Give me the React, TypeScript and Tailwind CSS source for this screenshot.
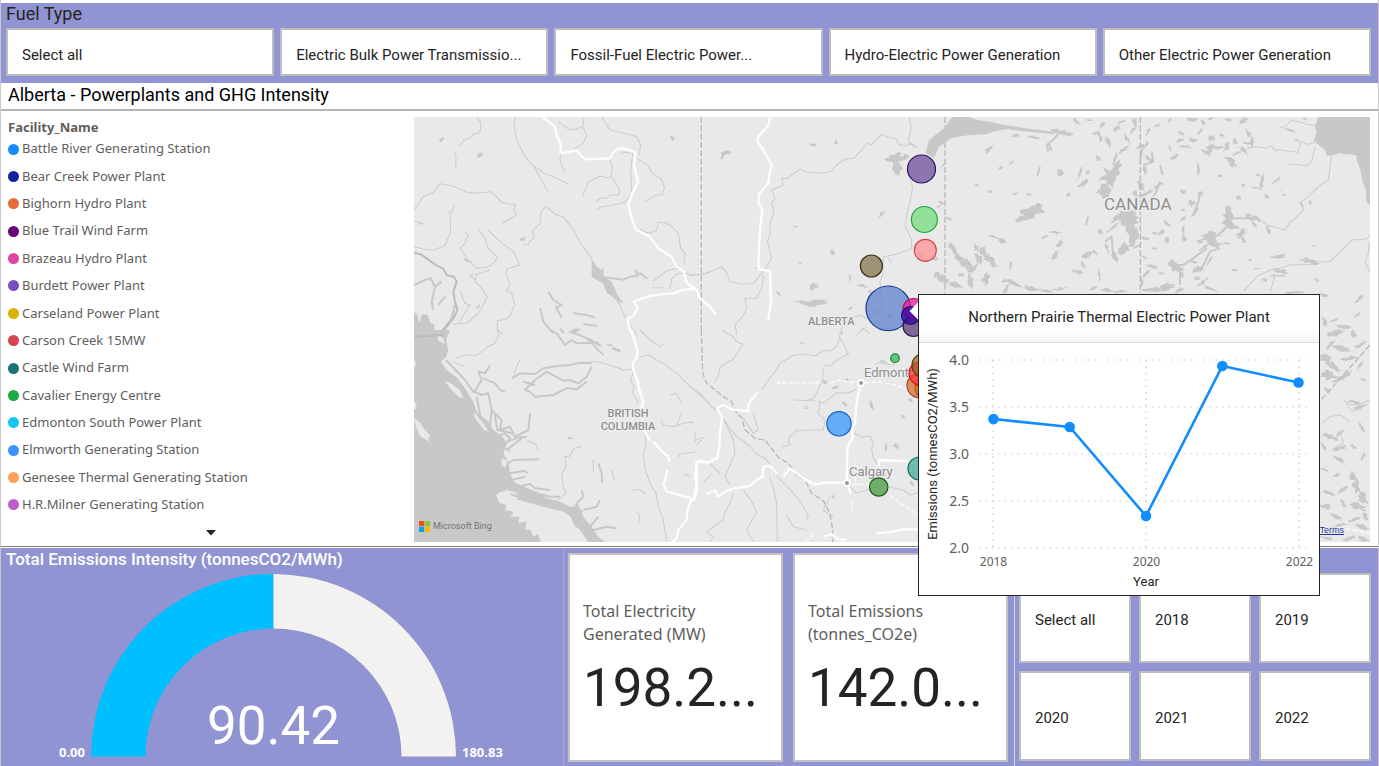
import React from "react";

const din = "font-['Roboto',sans-serif]";
const segoe = "font-['Noto_Sans','Open_Sans',sans-serif]";

const fuelTypes = [
  "Select all",
  "Electric Bulk Power Transmissio...",
  "Fossil-Fuel Electric Power...",
  "Hydro-Electric Power Generation",
  "Other Electric Power Generation",
];

const years = ["Select all", "2018", "2019", "2020", "2021", "2022"];

const facilities: [string, string][] = [
  ["Battle River Generating Station", "#118dff"],
  ["Bear Creek Power Plant", "#12239e"],
  ["Bighorn Hydro Plant", "#e66c37"],
  ["Blue Trail Wind Farm", "#6b007b"],
  ["Brazeau Hydro Plant", "#e044a7"],
  ["Burdett Power Plant", "#744ec2"],
  ["Carseland Power Plant", "#d9b300"],
  ["Carson Creek 15MW", "#d64550"],
  ["Castle Wind Farm", "#197278"],
  ["Cavalier Energy Centre", "#1aab40"],
  ["Edmonton South Power Plant", "#15c6f4"],
  ["Elmworth Generating Station", "#4092ff"],
  ["Genesee Thermal Generating Station", "#ffa058"],
  ["H.R.Milner Generating Station", "#be5dc9"],
];

/* Each map sheet is drawn at three units per pixel from its own origin. */
type Lake = [x: number, y: number, length: number, width: number, angle: number];

interface Sheet {
  origin: [number, number];
  water?: string;
  land?: string;
  rivers: string;
  channels?: string;
  coast?: string;
  roads?: string;
  minorRoads?: string;
  borders?: string;
  lakes: Lake[];
}

const sheets: Sheet[] = [
  {
    origin: [410, 115],
    water: "M12 590L22 600 28 625 36 598 52 600 62 625 72 628 74 645 100 655 100 662H12Z M545 430L560 455 575 465 582 455 580 480 605 500 622 540 640 565 625 560 590 532 578 505 545 485Z",
    rivers:
      "M200 6L212 22 212 45 205 55 190 58 180 70 165 72 150 92 M132 108L138 125 137 160 M316 6L312 30 318 65 325 85 345 125 370 152 405 175 440 190 475 206 M370 152L395 195 413 230 M444 20L480 45 500 42 518 34 522 8 M518 34L530 60 520 85 488 105 M575 6L600 45 640 54 680 65 692 90 688 120 M680 130L715 152 725 172 740 185 752 190 764 215 757 238 735 242 708 258 M452 118L450 135 456 155 468 170 M600 130L607 160 603 185 590 188 570 183 555 192 535 200 525 225 518 245 M605 185L630 228 625 240 600 240 590 250 575 248 558 258 M630 118L640 112 668 115 662 175 666 235 645 262 620 268 600 272 575 275 558 286 M12 285L40 245 70 232 90 206 125 212 150 222 170 232 190 235 245 230 275 262 300 268 316 268 312 285 319 300 300 312 278 325 M132 268L128 288 120 290 122 350 105 392 70 405 40 402 12 395 M12 318L40 325 22 328 M338 390L355 388 360 378 372 370 368 348 390 325 393 290 408 275 440 300 460 305 490 345 515 390 545 430 M615 545L632 575 645 605 660 630 680 660 M165 352L175 360 165 385 150 400 175 435 200 460 235 455 255 440 262 425 235 400 225 370 205 342 M235 345L270 380 310 410 330 450 290 462 288 480 300 505 290 528 305 535 315 570 300 600 290 612 262 618 262 640 275 658 M200 478L195 500 215 520 232 545 215 580 200 600 170 625 130 628 M240 465L200 478 180 480 195 495 M690 340L705 350 720 355 740 345 745 322 765 322 780 330 805 355 812 400 825 415 822 445 M728 500L770 468 800 460 840 480 880 478 900 470 M780 522L785 490 800 478 820 475 M728 518H758 M150 528L165 565 180 570 145 625",
    channels:
      "M560 488L600 488 640 494 660 485 680 482 690 474 712 492 M675 465L685 485 M415 530L430 555 455 570 438 578 455 607 M390 580L400 620 430 655 M462 655L450 640 M490 595L530 600 555 608 M12 510L45 495 62 490 75 515 65 560 70 585 M75 515L95 500 M85 570L105 545 M90 655L125 610 135 570 M520 628L560 632",
    coast: "M12 413L32 418 50 430 75 448 100 462 110 480 132 486 140 500 130 530 135 560 142 585 130 610 110 635 90 660",
    roads:
      "M398 6L410 15 435 35 440 60 452 90 452 115 470 112 500 105 512 122 528 133 600 130 610 112 625 100 650 102 675 112 672 150 684 200 665 240 655 268 665 310 678 345 720 365 745 400 785 425 800 455 822 470 828 500 855 525 M855 522L820 524 790 535 755 538 710 545 672 560 683 578 670 602 652 612 658 640 668 660",
    borders: "M874 6V645",
    lakes: [[95, 74, 18, 10, -30], [208, 122, 30, 12, -35], [337, 372, 22, 12, -35], [788, 70, 18, 12, 40], [175, 438, 30, 8, 20], [495, 648, 36, 14, -15], [205, 575, 18, 6, -60]],
  },
  {
    origin: [410, 330],
    water:
      "M12 0H120L108 30 115 60 108 82 92 95 110 120 140 142 165 175 190 215 200 245 235 275 250 300 275 318 290 340 280 370 295 395 300 430 312 455 340 470 380 485 410 505 450 515 480 530 500 530 520 560 540 585 565 620 585 636H12Z",
    land:
      "M258 495L272 485 292 480 325 490 328 505 345 515 400 530 460 545 482 560 492 585 510 600 535 636H392L385 612 370 620 362 600 345 598 350 575 325 580 328 560 300 560 312 545 285 540 290 525 268 518Z M104 152L120 158 150 180 160 205 145 200 125 180Z M12 265L30 278 45 300 60 315 55 330 68 345 50 330 30 318 18 290Z M12 90l6 5-2 15-4 2Z M12 212l8 10-2 15-6 2Z M82 15l18 10 5 18-20-12Z M190 245L220 280 235 305 222 300 195 265Z M275 385l18 8-8 20-10-8Z",
    rivers:
      "M138 85L165 75 200 76 235 50 255 40 265 15 262 0 M310 135L320 110 330 88 M540 95L560 95 600 105 640 120 668 118 M690 80L715 75 740 90 760 100 800 130 825 155 860 185 900 222 M690 0L720 30 750 50 760 40 M670 125L662 150 672 170 668 190 685 218 M705 300L708 345 700 370 706 420 720 460 738 490 745 530 760 570 770 636 M515 350L492 355 480 378 465 380 468 410 455 430 460 470 468 490 440 512 M605 420L613 450 M550 390V425 M780 195L798 190 815 218 M850 275L820 280 790 290 760 285 752 270 M800 285L815 248 M855 305V335 M808 382V372L858 365 M665 482L685 478 710 492 M680 548L690 555 685 580 M820 432L842 438 M350 330L380 345 382 360 M130 95L165 110",
    channels:
      "M108 90L165 150 190 185 M240 105L225 130 205 125 215 150 190 190 M220 145L255 160 270 180 285 185 M195 185L215 195 235 190 245 240 240 285 M200 200L210 255 M245 240L275 270 270 300 300 290 315 320 355 300 360 250 M255 255L262 300 310 310 M280 340L325 322 350 320 M290 360L340 320 M285 405L310 390 388 388 M300 430L345 422 352 430 M305 450L345 440 M325 470L360 462 375 475 420 480 M380 490L420 500 450 500 M305 145L330 130 375 132 400 115 440 108 480 105 510 98 545 100 M545 110L530 140 505 160 480 150 460 152 410 125 375 150 345 180 360 185 375 200 430 195 470 175 500 178 530 155 M340 155L375 165 M420 0L440 10 465 45 485 30 500 40 545 38 560 55 580 75 M480 5L520 20 540 30 M565 400L575 430 576 460 M515 480L520 500 500 520 510 560 540 590 M520 540L560 530 570 510 M540 590L565 560 M550 600L590 590 620 595 M180 240L150 215 M262 320L285 310 300 325 280 350 300 365 M350 500L365 485 395 495 M495 525L515 545 505 570 525 600 M470 545L490 540 500 560",
    coast: "M12 20L100 15",
    roads:
      "M665 0L672 25 682 60 680 85 668 100 670 120 682 150 688 180 700 215 692 240 700 300 720 330 M730 335L760 368 775 380 778 395 M772 420L768 440 760 460 770 485 790 490 845 505 832 540 830 570 805 600 800 625 785 636 M852 500L858 470 862 440 858 400 870 392 900 398",
    lakes: [[480, 325, 20, 8, 10], [620, 60, 30, 10, 30], [600, 45, 20, 6, 10], [550, 35, 50, 12, 30], [330, 500, 50, 20, 20], [505, 565, 50, 24, 60], [495, 540, 30, 20, 30]],
  },
  {
    origin: [690, 115],
    rivers:
      "M658 6L664 40 656 70 658 88 680 98 665 85 645 92 625 88 620 72 600 68 575 58 560 72 545 90 530 85 518 102 490 130 465 132 440 150 425 168 400 175 350 172 330 162 290 190 275 190 280 210 245 225 255 250 245 265 252 290 240 330 240 360 232 380 245 430 220 470 190 505 160 508 120 500 108 470 95 455 50 475 0 482 M220 480L215 520 200 550 165 550 170 580 160 600 135 630 140 660 M663 200L668 220 660 260 650 300 645 330 665 375 665 400 640 410 620 418 580 425 578 480 570 500 575 560 565 600 M455 660L455 635 480 610 515 600 530 612 550 600 560 580 M595 428L605 445 M500 660L520 640 540 655",
    roads:
      "M240 6L235 30 205 65 202 80 220 105 245 150 238 180 235 205 207 238 205 262 217 285 210 340 207 400 205 462 240 468 243 560 235 615 M0 510L20 525 30 550 60 575 78 600",
    borders: "M765 6V535",
    lakes: [
      [615, 130, 60, 36, 10], [620, 155, 50, 30, 70], [645, 125, 24, 16, 0], [108, 114, 36, 12, -10], [98, 124, 20, 8, -50], [370, 90, 24, 9, 15], [438, 80, 14, 12, 60], [575, 298, 26, 10, -50], [315, 335, 16, 6, 0], [428, 412, 20, 14, 40], [330, 444, 12, 6, 20], [370, 515, 34, 22, 0], [350, 565, 80, 12, 8], [385, 562, 60, 20, -20], [480, 488, 26, 8, 80], [518, 512, 36, 8, 10], [265, 535, 22, 8, 50], [540, 530, 14, 14, 0], [600, 605, 22, 12, 60], [480, 580, 20, 8, -20], [200, 460, 12, 8, 0],
      [690, 420, 26, 16, 60], [735, 430, 24, 14, 20],
    ],
  },
  {
    origin: [690, 330],
    rivers:
      "M95 0L130 20 140 35 158 42 145 65 130 88 90 110 88 130 75 155 M455 0L448 20 462 45 475 72 440 90 425 105 400 108 398 150 372 205 355 210 M450 25L440 48 425 62 400 62 375 78 345 72 310 75 270 100 255 125 235 150 215 180 M385 212L400 220 440 188 470 190 500 178 M390 215L385 250 405 270 400 300 360 300 320 302 295 325 300 345 275 350 M485 305L515 322 540 318 550 340 545 355 550 385 560 400 580 440 595 470 640 480 660 495 685 488 M0 170L35 195 60 225 95 255 115 290 140 320 175 345 200 372 225 385 240 402 M95 255L130 330 135 370 105 440 120 465 M160 480L185 515 200 545 170 600 190 636 M238 440L252 480 260 520 262 636 M262 440L300 478 335 520 355 560 350 570 M60 636L70 620 50 605 100 570 105 545 120 520 130 490 M0 275L10 280 M15 330L45 320 M20 345L35 330 M340 235H355L345 225 M310 210L375 212 M480 470L500 490 530 480 560 470 M40 460L65 430 M420 500L400 540 430 560 M190 250L205 300 190 310 160 265 M60 400L90 430 M290 555L310 590 350 600 M555 105L565 98 610 105 620 95",
    roads:
      "M80 235L100 225 125 238 175 243 175 222 205 185 M80 235L97 262 90 310 88 355 80 385 55 398 22 395 15 435 22 480 12 510 0 515 M50 492L75 482 85 500 105 485 130 475 180 468 200 450 218 440 220 410 240 408 262 430 M280 440L300 415 345 448 375 463 405 458 470 458 M512 165L505 190 498 235 495 280 487 295 488 320 472 355 470 455 482 492 M565 410L567 390 640 393 685 400 M400 620L425 612 445 628 470 630 M560 610L610 605 640 598 685 598 M262 158H270",
    minorRoads:
      "M275 158H395 M420 160L450 150 495 158 M525 160L560 155 620 165 650 180 M495 400V462 M488 463H540 M600 495L640 525 685 555 M485 515L488 545 M0 505H20 M345 635L370 615 M395 108l5 5",
    borders: "M34 0L38 130 50 160 100 200 125 215 140 250 155 262 165 300 195 325 225 330 265 382 295 400 320 435 345 450 365 490 400 512 420 550 428 600V636",
    lakes: [
      [465, 222, 24, 10, 40], [545, 225, 30, 10, 70], [405, 155, 16, 12, 20], [438, 172, 20, 10, -10], [620, 350, 26, 14, 50], [588, 350, 26, 10, 90], [475, 300, 16, 10, 50], [580, 95, 24, 8, 10], [545, 140, 20, 8, -20], [470, 150, 18, 10, -10], [430, 500, 12, 8, 0], [665, 460, 22, 8, 60], [600, 130, 18, 6, 10], [335, 40, 14, 6, 20], [660, 210, 20, 8, 20], [640, 260, 16, 8, 40],
    ],
  },
  {
    origin: [980, 115],
    water:
      "M1015 6H1170V270L1160 262 1158 225 1148 200 1140 160 1130 135 1130 122 1112 118 1090 118 1080 114 1060 120 1040 122 1035 105 1018 92 1002 78 1010 50 1005 35Z M-163 113L-153 75 -108 40 -83 6H-33L-10 15 40 22 90 35 85 42 45 48 20 58 -30 60 -83 68 -123 95 -138 130Z M75 30L150 42 225 50 220 58 150 50 90 44Z",
    rivers:
      "M1055 120L1045 195 1015 215 985 245 965 260 970 285 945 310 930 322 915 345 890 338 860 330 835 310 M800 100L830 95 860 100 872 92 885 105 900 105 955 112 962 80 985 88 1010 80 M1170 360L1160 372 1115 375 1085 405 1050 440 1000 440 M1000 448L930 450 900 460 870 465 830 485 790 530 M1168 380L1165 415 1155 440 1170 472 M1005 95L995 140 980 152 945 148 922 148 M900 38L920 32 935 15 960 22 980 28 1012 32 M870 530L880 500 885 480 M900 225L905 225",
    channels:
      "M205 110L200 90 222 72 240 50 M640 300L655 260 662 232 M505 260L525 240 540 200 M350 235L365 220 M375 380L395 365 400 430 M575 450L610 450 640 430 680 400 M600 460L600 510 M65 500L90 495 120 515 M840 225L850 185 M655 180L655 150 M540 150L548 180 M470 100L490 90 480 140 M860 335L870 355 M760 310L830 310 840 320 M660 470L690 410 720 400 M515 110L520 140 490 150 M325 305L318 330 M180 155L172 182",
    borders: "M481 6V535",
    lakes: [
      [390, 185, 70, 56, -50], [378, 225, 56, 34, 100], [410, 160, 56, 20, -60], [405, 130, 50, 10, -70], [430, 105, 40, 12, -30], [445, 310, 66, 48, 10], [460, 355, 90, 40, 85], [435, 400, 50, 26, 130], [405, 425, 40, 20, 60], [420, 300, 60, 18, -40], [155, 292, 72, 42, -10], [125, 312, 50, 18, -30], [170, 275, 40, 16, -30], [240, 172, 26, 22, 100], [25, 104, 30, 12, -40], [60, 160, 22, 8, -40], [95, 142, 22, 6, -45], [105, 62, 30, 10, 0], [160, 66, 40, 10, 10], [245, 52, 60, 18, 10], [210, 95, 26, 10, 70], [30, 230, 16, 12, 0], [105, 237, 18, 8, -20], [148, 238, 20, 8, 10], [265, 240, 18, 10, -30], [40, 365, 40, 10, 20], [65, 378, 36, 14, 30], [25, 430, 40, 26, 60], [10, 410, 30, 20, 80], [18, 490, 40, 26, 110], [40, 450, 26, 12, 20], [92, 450, 34, 8, 95], [225, 352, 40, 10, 5], [195, 365, 24, 8, -20], [240, 385, 34, 14, -60], [225, 420, 40, 14, -50], [290, 470, 34, 12, 10], [320, 420, 30, 20, -20], [310, 450, 24, 10, 60], [358, 480, 40, 8, 85], [380, 395, 40, 10, 70], [395, 340, 60, 8, -40], [360, 350, 20, 14, 60], [345, 412, 24, 10, 30], [300, 175, 50, 8, -70], [310, 205, 36, 14, -40], [322, 172, 16, 12, 0], [355, 130, 20, 16, 60], [360, 65, 40, 10, 70], [385, 80, 40, 14, 60], [365, 30, 26, 10, -50], [345, 55, 18, 10, 0], [410, 40, 30, 10, -40], [425, 20, 30, 8, -20], [465, 20, 20, 16, 60], [460, 45, 30, 10, -50], [290, 20, 26, 10, 40], [325, 15, 26, 6, 0], [440, 70, 30, 10, 60], [505, 50, 28, 8, -60], [530, 32, 22, 10, -20], [570, 15, 18, 10, -30], [498, 90, 30, 8, -60], [510, 135, 40, 14, 40], [495, 165, 30, 16, 90], [485, 215, 40, 16, 70], [500, 235, 50, 10, -30], [530, 215, 30, 8, -50], [465, 235, 24, 16, 60], [560, 325, 30, 12, 40], [545, 352, 24, 12, -50], [525, 355, 20, 10, 10], [495, 370, 34, 10, 5], [560, 375, 14, 22, 0], [525, 400, 16, 8, 0], [515, 455, 40, 12, 20], [500, 475, 40, 10, -40], [545, 475, 18, 8, 0], [470, 395, 30, 8, -30], [490, 425, 20, 8, 30], [610, 230, 20, 14, 0], [635, 265, 20, 22, 60], [660, 235, 16, 16, 20], [645, 290, 40, 10, -60], [610, 310, 22, 12, -30], [612, 370, 24, 16, 80], [610, 345, 26, 10, 90], [660, 380, 20, 12, 0], [610, 285, 16, 8, 0],
      [745, 305, 66, 28, 85], [750, 330, 50, 22, 20], [725, 350, 50, 10, -40], [690, 365, 60, 40, -20], [700, 385, 50, 18, 30], [675, 395, 40, 12, -30], [785, 355, 40, 20, -50], [790, 375, 26, 12, 60], [825, 310, 44, 14, 10], [820, 325, 30, 10, 60], [805, 300, 20, 8, 0], [865, 345, 24, 12, 70], [740, 385, 40, 6, 0], [810, 435, 16, 8, 0], [830, 460, 24, 6, 0], [765, 465, 20, 8, 0], [895, 425, 50, 14, -5], [905, 470, 60, 16, 10], [895, 482, 50, 8, 0], [985, 437, 60, 16, 15], [1000, 392, 18, 5, 0], [1010, 495, 18, 8, 30], [855, 495, 26, 12, 10],
      [580, 450, 40, 30, 40], [600, 462, 34, 16, 0], [655, 462, 40, 20, -20], [640, 440, 30, 10, 20], [690, 435, 30, 8, -60], [605, 480, 26, 10, 80], [560, 515, 60, 20, -10], [520, 525, 70, 18, 5], [600, 525, 40, 12, -20], [670, 500, 40, 10, -40], [690, 520, 50, 8, 20], [650, 490, 22, 12, 0], [100, 505, 60, 12, 20], [150, 520, 50, 14, 10], [80, 520, 40, 10, -60], [200, 528, 50, 10, 10], [240, 522, 40, 10, -10], [380, 525, 40, 14, 0], [340, 520, 30, 8, -30], [420, 530, 40, 8, 0], [485, 500, 30, 12, 80],
      [600, 75, 24, 12, -30], [585, 125, 26, 12, -30], [570, 100, 22, 10, 60], [615, 95, 44, 10, 5], [640, 75, 36, 12, 10], [660, 50, 40, 8, -60], [605, 55, 20, 10, 30], [690, 100, 36, 26, -60], [680, 115, 34, 10, 30], [695, 70, 26, 18, 20], [715, 98, 30, 10, 0], [740, 95, 36, 14, -70], [755, 140, 36, 22, 50], [745, 130, 26, 10, 10], [770, 115, 24, 10, -20], [765, 80, 24, 14, 60], [725, 60, 24, 10, 20], [790, 105, 36, 12, 40], [805, 55, 30, 12, 60], [815, 80, 30, 12, 80], [800, 85, 30, 8, 10], [655, 160, 36, 8, 80], [720, 182, 18, 10, 20], [635, 14, 30, 12, 0], [670, 22, 22, 10, 60], [690, 12, 30, 8, -30], [745, 14, 24, 10, 0], [790, 18, 30, 12, -20], [795, 10, 20, 6, 20], [845, 200, 50, 12, 95], [835, 180, 16, 8, 20], [825, 218, 30, 8, 10], [790, 210, 14, 8, 0], [860, 245, 18, 12, 40], [775, 248, 24, 14, -20], [890, 195, 30, 8, -40], [912, 240, 14, 5, -20], [965, 270, 20, 8, 60], [990, 262, 10, 12, 0], [930, 45, 36, 8, 20], [950, 75, 20, 6, 30], [975, 12, 12, 8, 0], [545, 205, 12, 8, 0], [1135, 555, 34, 8, -50], [1145, 548, 16, 6, -20],
      [-115, 265, 20, 12, 20], [-125, 275, 18, 8, -30], [-95, 310, 30, 8, 20], [-80, 400, 40, 22, 60], [-60, 430, 50, 20, 40], [-40, 450, 60, 26, 50], [-110, 495, 50, 22, 30], [-75, 510, 50, 16, 20], [-30, 500, 40, 20, 80], [-10, 400, 30, 16, 60], [-20, 460, 40, 14, -40], [-130, 480, 22, 16, 0], [-55, 480, 26, 10, 0], [-5, 430, 34, 20, 60], [-110, 150, 24, 6, -50], [-10, 210, 14, 8, -30],
    ],
  },
  {
    origin: [910, 290],
    rivers:
      "M1300 330L1320 345 1350 342 1380 330 M1310 345L1325 362 1355 358 M1235 400L1260 380 1290 375 1320 395 M1290 420L1300 460 1280 470",
    minorRoads: "M1230 722L1300 716 1340 722 1380 730",
    borders: "M1235 328L1380 165",
    lakes: [
      [1350, 25, 34, 8, -50], [1340, 75, 26, 8, -40], [1245, 95, 30, 16, 60], [1275, 90, 40, 8, -20], [1300, 110, 50, 12, 10], [1275, 130, 60, 20, -10], [1330, 130, 30, 14, 60], [1350, 165, 50, 12, -30], [1295, 175, 60, 16, 10], [1260, 165, 40, 10, -40], [1245, 205, 40, 24, 20], [1320, 205, 60, 14, -10], [1270, 230, 50, 22, 30], [1350, 225, 40, 10, -50], [1300, 260, 60, 18, -30], [1255, 255, 50, 26, 10], [1250, 300, 30, 12, 40], [1360, 270, 30, 8, 20], [1330, 335, 50, 10, 10], [1350, 350, 40, 12, -20], [1355, 412, 30, 12, 60], [1260, 440, 50, 16, 20], [1290, 430, 40, 8, -40], [1285, 475, 50, 14, -10], [1330, 470, 26, 10, 40], [1240, 470, 26, 10, 60], [1360, 500, 30, 10, -60], [1290, 510, 40, 12, 30], [1330, 560, 36, 22, 40], [1340, 590, 40, 22, 80], [1280, 555, 30, 10, -20], [1245, 540, 30, 8, 20], [1300, 600, 40, 12, -30], [1260, 610, 40, 10, 20], [1360, 625, 40, 26, 50], [1345, 650, 50, 20, 20], [1300, 640, 36, 12, 60], [1250, 650, 36, 14, 10], [1280, 680, 50, 12, 30], [1330, 690, 40, 12, -20], [1365, 680, 30, 14, 70], [1355, 710, 40, 16, 20], [1290, 705, 50, 10, -10], [1250, 745, 50, 8, 10], [1320, 745, 50, 12, -20], [1360, 748, 36, 14, 20],
      [1240, 15, 30, 10, 10], [1150, 8, 60, 10, 0],
    ],
  },
];

function lakeOutline([x, y, length, width, angle]: Lake): string {
  const count = 18;
  const a = (angle * Math.PI) / 180;
  let seed = Math.abs(x * 131 + y * 977) + 7;
  let d = "";
  for (let i = 0; i < count; i++) {
    seed = (seed * 1103 + 12345) % 65521;
    const jag = 0.45 + (seed / 65521) * 0.85;
    const t = (i / count) * Math.PI * 2;
    const px = (Math.cos(t) * length * jag) / 2;
    const py = (Math.sin(t) * width * jag) / 2;
    d += `${i ? "L" : "M"}${Math.round(x + px * Math.cos(a) - py * Math.sin(a))} ${Math.round(y + px * Math.sin(a) + py * Math.cos(a))}`;
  }
  return d + "Z";
}

/* cx, cy, r, fill, stroke */
const bubbles: [number, number, number, string, string][] = [
  [921.5, 169, 14, "rgba(107,72,155,.72)", "#24135c"],
  [924.4, 219.5, 13, "rgba(120,220,130,.78)", "#27a343"],
  [925.3, 250.3, 11, "rgba(252,150,150,.78)", "#d2484c"],
  [871.4, 266, 11, "rgba(131,117,77,.75)", "#3b3119"],
  [888.3, 308.3, 22.3, "rgba(96,128,206,.75)", "#1d3c94"],
  [913.5, 326, 10.5, "rgba(95,60,120,.75)", "#2c1c3a"],
  [913.5, 309, 10.5, "rgba(235,30,150,.75)", "#b0126b"],
  [910.5, 315.5, 9, "rgba(50,10,160,.78)", "#12126e"],
  [895, 358.2, 4.3, "rgba(60,180,90,.75)", "#188a34"],
  [919, 385.5, 12, "rgba(214,105,50,.72)", "#b0401c"],
  [926, 388, 11, "rgba(214,115,10,.7)", "#b0601c"],
  [921, 373.5, 12, "rgba(250,50,50,.7)", "#d11a1a"],
  [924, 365.5, 12, "rgba(160,90,20,.65)", "#5d3a10"],
  [839, 423.8, 12.2, "rgba(65,157,250,.8)", "#1a5cc4"],
  [919.5, 468.5, 11.5, "rgba(75,175,160,.8)", "#17655f"],
  [878.7, 487, 9.2, "rgba(80,160,75,.8)", "#175c17"],
];

function MapDrawing() {
  return (
    <svg
      className="block h-full w-full font-['Roboto',sans-serif]"
      viewBox="414 117 956 425"
      preserveAspectRatio="xMinYMin slice"
      role="img"
      aria-label="Map of power plants in Alberta"
    >
      <rect x="414" y="117" width="956" height="425" fill="#e9e9e9" />
      {sheets.map((s) => (
        <g
          key={s.origin.join()}
          transform={`translate(${s.origin[0]} ${s.origin[1]}) scale(0.33333)`}
          fill="none"
          strokeLinejoin="round"
        >
          {s.water && <path d={s.water} fill="#c8c8c8" />}
          {s.channels && <path d={s.channels} stroke="#c8c8c8" strokeWidth="6" />}
          {s.land && <path d={s.land} fill="#e9e9e9" />}
          <path d={s.rivers} stroke="#cdcdcd" strokeWidth="3.2" />
          <path d={s.lakes.map(lakeOutline).join("")} fill="#c8c8c8" />
          {s.coast && <path d={s.coast} stroke="#bdbbbb" strokeWidth="6" />}
          {s.borders && <path d={s.borders} stroke="#b9b9b9" strokeWidth="4" strokeDasharray="18 7" />}
          {s.minorRoads && <path d={s.minorRoads} stroke="#f9f9f9" strokeWidth="5" strokeDasharray="14 6" />}
          {s.roads && <path d={s.roads} stroke="#fdfdfd" strokeWidth="7" />}
        </g>
      ))}
      <g fill="#8f8f8f" stroke="#ededed" strokeWidth="3" paintOrder="stroke" strokeLinejoin="round">
        <text x="1104" y="210" fontSize="17">CANADA</text>
        <text x="808" y="325" fontSize="11" fontWeight="500">ALBERTA</text>
        <text x="628" y="417" fontSize="11" fontWeight="500" textAnchor="middle">BRITISH</text>
        <text x="628" y="430" fontSize="11" fontWeight="500" textAnchor="middle">COLUMBIA</text>
        <text x="864" y="377" fontSize="13">Edmonton</text>
        <text x="849" y="476" fontSize="13">Calgary</text>
      </g>
      <g fill="#999" stroke="#fff" strokeWidth="2">
        <circle cx="861" cy="383" r="3" />
        <circle cx="847" cy="483" r="3" />
      </g>
      {bubbles.map(([cx, cy, r, fill, stroke]) => (
        <circle key={`${cx}-${cy}`} cx={cx} cy={cy} r={r} fill={fill} stroke={stroke} strokeWidth="1.2" />
      ))}
      <path d="M909.5 311L919 301.5V320.5Z" fill="#fff" />
    </svg>
  );
}

const points = [
  [75.5, 125],
  [151.7, 133],
  [228, 222],
  [304.3, 72],
  [380.5, 88.5],
];
const yTicks: [string, number][] = [
  ["4.0", 65.5],
  ["3.5", 112.5],
  ["3.0", 159.5],
  ["2.5", 206.5],
  ["2.0", 253.5],
];
const xTicks: [string, number][] = [
  ["2018", 74.5],
  ["2020", 227.5],
  ["2022", 380.5],
];

function TrendTooltip() {
  return (
    <section
      role="tooltip"
      className={`absolute left-[504px] top-[177px] z-10 flex h-[302px] w-[402px] flex-col border border-[#252423] bg-white ${din}`}
    >
      <h3 className="flex h-[48px] items-center justify-center border-b border-[#dedede] bg-linear-to-b from-white from-75% to-[#f5f5f5] pb-0.5 text-[15px] text-[#252423]">
        Northern Prairie Thermal Electric Power Plant
      </h3>
      <svg className="min-h-0 flex-1" viewBox="1 49 400 252" role="img" aria-label="Emissions by year">
        <g stroke="#c8c6c4" strokeDasharray="1.4 5" strokeWidth="1.2">
          {yTicks.map(([label, y]) => (
            <line key={label} x1="61" x2="389" y1={y + 0.5} y2={y + 0.5} />
          ))}
          {xTicks.map(([label, x]) => (
            <line key={label} x1={x + 0.5} x2={x + 0.5} y1="66" y2="254" />
          ))}
        </g>
        <g fill="#605e5c" className={segoe}>
          {yTicks.map(([label, y]) => (
            <text key={label} x="51" y={y + 5} fontSize="14" textAnchor="end">{label}</text>
          ))}
          {xTicks.map(([label, x]) => (
            <text key={label} x={x + 1} y="272" fontSize="12" textAnchor="middle">{label}</text>
          ))}
        </g>
        <g fill="#252423">
          <text x="228" y="292" fontSize="13" textAnchor="middle">Year</text>
          <text transform="translate(19 160) rotate(-90)" fontSize="13" textAnchor="middle">
            Emissions (tonnesCO2/MWh)
          </text>
        </g>
        <polyline points={points.map((p) => p.join()).join(" ")} fill="none" stroke="#118dff" strokeWidth="2.6" />
        {points.map(([x, y]) => (
          <circle key={x} cx={x} cy={y} r="5.3" fill="#118dff" />
        ))}
      </svg>
    </section>
  );
}

function Tile({ label, className }: { label: string; className: string }) {
  return (
    <button
      type="button"
      className={`min-w-0 truncate border-2 border-[#bfbcbd] bg-white px-3.5 text-left text-[15px] text-[#252423] ${din} ${className}`}
    >
      {label}
    </button>
  );
}

function Card({ label, value }: { label: string; value: string }) {
  return (
    <section className="flex min-w-0 flex-col border-2 border-[#c4c1c4] bg-white px-[13px] pt-[45px]">
      <h2 className={`text-[16px] leading-[23px] text-[#605e5c] ${segoe}`}>{label}</h2>
      <p className={`mt-2 text-[53px] leading-[68px] text-[#252423] ${din}`}>{value}</p>
    </section>
  );
}

export default function App() {
  return (
    <main className="flex min-h-screen flex-col border-x border-x-[#c9c9c9] bg-white pt-[3px]">
      <section className="bg-[#9094d2] pr-[7px] pb-[7px] pl-[5px]">
        <h2 className={`h-[25px] text-[18px] leading-[22px] text-[#252423] ${din}`}>Fuel Type</h2>
        <div className="grid grid-cols-5 gap-1.5">
          {fuelTypes.map((f) => (
            <Tile key={f} label={f} className="h-[48px] pt-1.5" />
          ))}
        </div>
      </section>

      <h1 className={`border-b-2 border-[#b4b4b4] px-[7px] pb-0.5 text-[18px] leading-[24px] text-black ${din}`}>
        Alberta - Powerplants and GHG Intensity
      </h1>

      <section className="flex h-[436px] border-b border-[#808080] pt-[6px] pr-2">
        <div className={`flex w-[413px] shrink-0 flex-col text-[13px] text-[#605e5c] ${segoe}`}>
          <h2 className="px-[7px] pb-0.5 leading-[20px] font-bold">Facility_Name</h2>
          <ul className="flex h-[376px] flex-col justify-between pl-[7px]">
            {facilities.map(([name, color]) => (
              <li key={name} className="flex h-5 items-center gap-[3px]">
                <span className="size-[11px] rounded-full" style={{ backgroundColor: color }} />
                {name}
              </li>
            ))}
          </ul>
          <button type="button" aria-label="More facilities" className="mt-3 flex h-3 w-[420px] items-center justify-center">
            <svg width="10" height="6" viewBox="0 0 10 6">
              <path d="M0 0H10L5 5.5Z" fill="#252423" />
            </svg>
          </button>
        </div>
        <div className="relative h-[425px] min-w-0 flex-1">
          <MapDrawing />
          <div className="absolute bottom-2 left-[5px] flex items-center gap-[3px] font-['Roboto',sans-serif] text-[9px] leading-4 text-[#757575]">
            <svg width="11" height="11" viewBox="0 0 11 11">
              <path d="M0 0H5.2V5.2H0Z" fill="#f25022" />
              <path d="M5.8 0H11V5.2H5.8Z" fill="#8cc63e" />
              <path d="M0 5.8H5.2V11H0Z" fill="#00a4ef" />
              <path d="M5.8 5.8H11V11H5.8Z" fill="#ffb900" />
            </svg>
            Microsoft Bing
          </div>
          <a href="#terms" className="absolute right-[26px] bottom-1 font-['Liberation_Sans',sans-serif] text-[9px] leading-4 text-[#1a3a9c] underline">
            Terms
          </a>
          <TrendTooltip />
        </div>
      </section>

      <div className="mt-px grid flex-1 grid-cols-[563fr_451fr_363fr] bg-[#9094d2]">
        <section className="flex min-w-0 flex-col border-r border-[#a3a6dc]">
          <h2 className={`px-[5px] text-[17px] leading-[23px] font-medium text-white ${din}`}>
            Total Emissions Intensity (tonnesCO2/MWh)
          </h2>
          <svg className="block h-[195px] w-full" viewBox="1 571 562 195" role="img" aria-label="Total emissions intensity gauge">
            <path d="M91 756.5A182.5 182.5 0 0 1 273.5 574V628.5A128 128 0 0 0 145.5 756.5Z" fill="#00bfff" />
            <path d="M273.5 574A182.5 182.5 0 0 1 456 756.5H401.5A128 128 0 0 0 273.5 628.5Z" fill="#f3f2f1" />
            <g fill="#fff">
              <text x="273.5" y="744" fontSize="53" textAnchor="middle" className={din}>90.42</text>
              <text x="85" y="757" fontSize="13" fontWeight="700" textAnchor="end" className={segoe}>0.00</text>
              <text x="462" y="757" fontSize="13" fontWeight="700" className={segoe}>180.83</text>
            </g>
          </svg>
        </section>

        <div className="grid grid-cols-2 gap-2.5 border-r border-[#d4d5ee] pt-[5px] pr-1.5 pb-1 pl-1">
          <Card label="Total Electricity Generated (MW)" value="198.2..." />
          <Card label="Total Emissions (tonnes_CO2e)" value="142.0..." />
        </div>

        <section className="flex flex-col pt-[3px] pr-[7px] pb-[5px] pl-1">
          <h2 className={`h-[22px] text-[18px] leading-[22px] text-[#252423] ${din}`}>Year</h2>
          <div className="grid flex-1 grid-cols-3 grid-rows-2 gap-2">
            {years.map((y) => (
              <Tile key={y} label={y} className="pt-1" />
            ))}
          </div>
        </section>
      </div>
    </main>
  );
}
